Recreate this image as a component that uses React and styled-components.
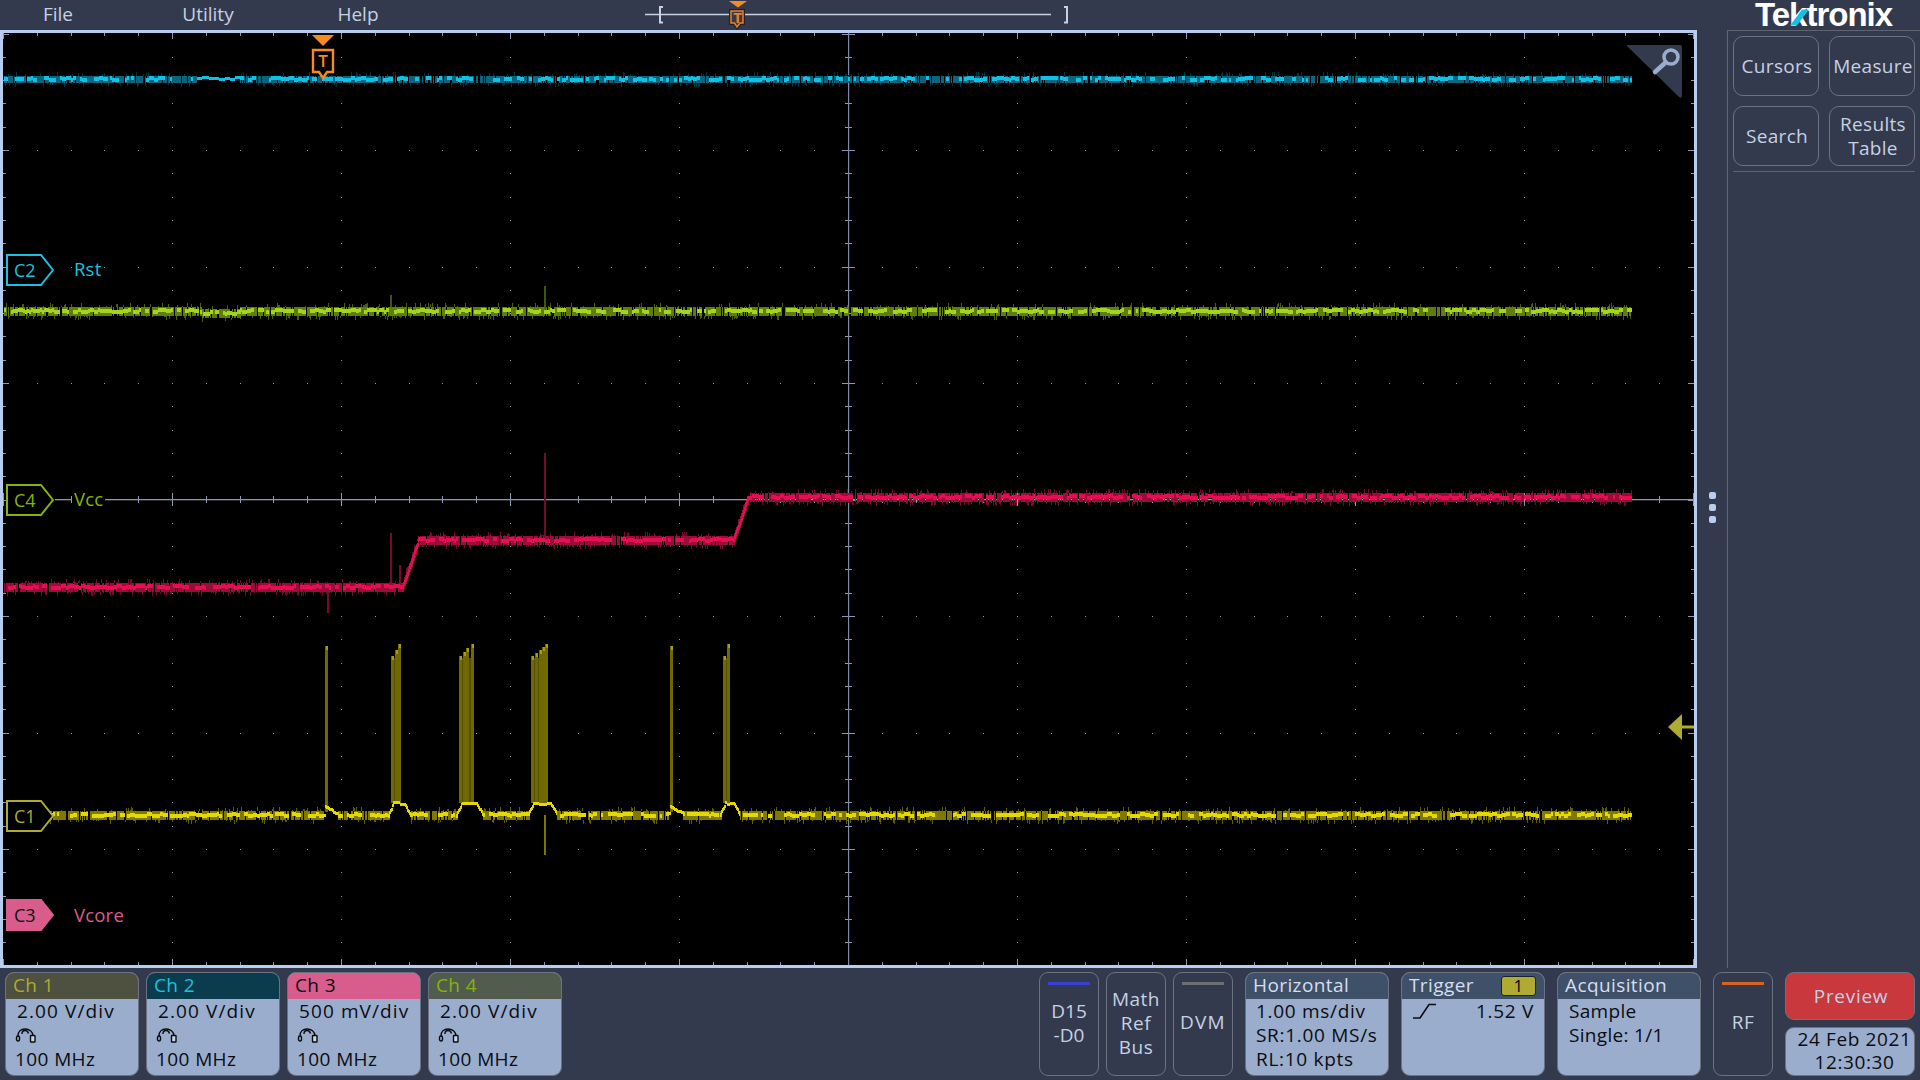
import React from "react";
import styled, { createGlobalStyle } from "styled-components";

const BG = "#333a4d";
const FRAME = "#b9cdef";
const BODY = "#9badcd";
const EDGE = "#6c7280";
const LIGHT = "#c5d1e4";

const Global = createGlobalStyle`
  html, body { margin: 0; padding: 0; background: ${BG}; }
  body { width: 1920px; height: 1080px; overflow: hidden; font-family: "Open Sans", "Noto Sans", sans-serif; }
`;

const Screen = styled.div`
  width: 1920px; height: 1080px; display: flex; flex-direction: column; background: ${BG};
`;
const Upper = styled.div`display: flex; height: 968px;`;
const MainColumn = styled.div`width: 1727px; display: flex; flex-direction: column;`;
const MenuBar = styled.div`height: 30px; display: flex; align-items: center; padding-left: 8px;`;
const MenuItem = styled.div`
  width: 100px; margin-right: 50px; text-align: center; font-size: 19px; line-height: 29px; color: ${LIGHT}; height: 30px;
`;
const Timeline = styled.div`position: relative; width: 430px; height: 30px; margin-left: 182px;`;
const TimelineArt = styled.svg`display: block;`;
const MiniT = styled.span`
  position: absolute; left: 89px; top: 8px; width: 17px; text-align: center; font-size: 15px; font-weight: 700; line-height: 18px; color: #f0801f;
`;

const PlotRow = styled.div`display: flex; flex: 1;`;
const Graticule = styled.div`
  position: relative; width: 1691px; height: 932px; border: 3px solid ${FRAME}; background: #000; overflow: hidden;
`;
const PlotArt = styled.svg`display: block;`;
const HandleStrip = styled.div`
  width: 30px; display: flex; flex-direction: column; align-items: center; justify-content: center; gap: 5px; padding-top: 16px; box-sizing: border-box;
`;
const HandleDot = styled.span`display: block; width: 7px; height: 7px; border-radius: 2px; background: ${FRAME};`;

const Tag = styled.div`
  position: absolute; left: 3px; top: ${(p) => p.$top}px; width: 48px; height: 32px; display: flex; align-items: center; padding-left: 8px; box-sizing: border-box;
  font-size: 18px; line-height: 32px; color: ${(p) => p.$fg};
`;
const TagShape = styled.svg`position: absolute; left: 0; top: 0;`;
const TagText = styled.span`position: relative;`;
const TraceName = styled.div`
  position: absolute; left: 69px; top: ${(p) => p.$top}px; padding: 0 2px; background: #000; font-size: 18.5px; line-height: 22px; color: ${(p) => p.$fg}; letter-spacing: 0.2px;
`;
const TriggerMark = styled.div`position: absolute; left: 308px; top: 2px; width: 24px; height: 48px;`;
const TriggerArt = styled.svg`position: absolute; left: 0; top: 0;`;
const TriggerLetter = styled.span`
  position: absolute; left: 0; top: 14px; width: 24px; text-align: center; font-size: 17px; font-weight: 600; line-height: 24px; color: #f68b1f;
`;

const SideColumn = styled.div`width: 193px; display: flex; flex-direction: column;`;
const LogoRow = styled.div`height: 30px; position: relative;`;
const Logo = styled.div`
  position: absolute; left: 28px; top: 0; font-family: "Liberation Sans", sans-serif; font-weight: 700; font-size: 33px; line-height: 30px; letter-spacing: -1px; color: #fff; white-space: nowrap;
`;
const LogoSlash = styled.svg`position: absolute; left: 0; top: 0;`;
const SidePanel = styled.div`flex: 1; border-left: 1px solid #5f6470; border-top: 1px solid #5f6470;`;
const ToolGrid = styled.div`
  display: grid; grid-template-columns: 86px 86px; grid-auto-rows: 60px; gap: 10px; margin: 5px 5px 0 5px; padding-bottom: 5px; border-bottom: 1px solid #5f6470;
`;
const ToolButton = styled.div`
  box-sizing: border-box; border: 1px solid ${EDGE}; border-radius: 10px; display: flex; align-items: center; justify-content: center; text-align: center; padding-left: 2px; font-size: 19px; line-height: 24px; color: ${LIGHT}; letter-spacing: 0.3px;
`;

const BottomBar = styled.div`
  height: 112px; box-sizing: border-box; display: flex; padding: 4px 5px 4px 5px; gap: 12px;
`;
const ChannelGroup = styled.div`display: flex; gap: 7px; margin-right: auto;`;
const SmallGroup = styled.div`display: flex; gap: 7px;`;
const Card = styled.div`
  width: ${(p) => p.$w}px; box-sizing: border-box; height: 104px; border: 1.5px solid ${EDGE}; border-radius: 9px; overflow: hidden; background: ${BODY}; display: flex; flex-direction: column;
`;
const CardHead = styled.div`
  height: 26px; box-sizing: border-box; flex: none; display: flex; align-items: center; justify-content: space-between; padding: 0 8px 2px 7px; font-size: 19px; letter-spacing: 0.4px; background: ${(p) => p.$bg}; color: ${(p) => p.$fg};
`;
const CardBody = styled.div`
  position: relative; flex: 1; padding: 0 0 0 ${(p) => p.$inset || 10}px; font-size: 19px; line-height: 24px; color: #0a0c10; letter-spacing: ${(p) => p.$ls || 0.7}px; white-space: nowrap;
`;
const ScaleLine = styled.div`margin-left: 1px; letter-spacing: 1.1px;`;
const BandLine = styled.div`margin-left: -1px; letter-spacing: 0.4px;`;
const ProbeRow = styled.div`height: 24px; display: flex; align-items: center; margin-left: -1px;`;
const TriggerBadge = styled.span`
  width: 35px; height: 20px; flex: none; margin-bottom: -2px; box-sizing: border-box; border: 1px solid #1d2026; border-radius: 3px; background: #aeaa32; color: #000; font-size: 16px; line-height: 18px; text-align: center;
`;
const TriggerLine = styled.div`display: flex; align-items: center; justify-content: space-between; padding-right: 10px; height: 24px;`;
const Outline = styled.div`
  width: 60px; box-sizing: border-box; height: 104px; border: 1.5px solid ${EDGE}; border-radius: 9px; display: flex; flex-direction: column; align-items: center; padding-top: ${(p) => p.$pad}px; font-size: 19px; line-height: 24px; color: ${LIGHT}; letter-spacing: ${(p) => p.$ls ?? 0.5}px;
`;
const ColorBar = styled.span`
  display: block; width: 42px; height: 3px; flex: none; background: ${(p) => p.$c}; margin-bottom: ${(p) => p.$gap}px;
`;
const StatusColumn = styled.div`width: 130px; display: flex; flex-direction: column; gap: 7px;`;
const PreviewButton = styled.div`
  height: 48px; box-sizing: border-box; border: 1.5px solid ${EDGE}; border-radius: 9px; padding-left: 2px; background: #c8383d; color: ${LIGHT}; font-size: 19px; letter-spacing: 0.7px; display: flex; align-items: center; justify-content: center;
`;
const DateBox = styled.div`
  height: 49px; box-sizing: border-box; border: 1.5px solid ${EDGE}; border-radius: 9px; padding-left: 9px; background: ${BODY}; color: #0a0c10; font-size: 19px; line-height: 23px; text-align: center; letter-spacing: 0.6px; white-space: nowrap;
`;

/* ---------- waveform data ---------- */
const rng = (seed) => () => {
  seed |= 0; seed = (seed + 0x6d2b79f5) | 0;
  let t = Math.imul(seed ^ (seed >>> 15), 1 | seed);
  t = (t + Math.imul(t ^ (t >>> 7), 61 | t)) ^ t;
  return ((t ^ (t >>> 14)) >>> 0) / 4294967296;
};

const bar = (x, y, w, h) => `M${x} ${y}h${w}v${h}h${-w}z`;

function makeTrace({ seed, from, to, level, quiet, holes = 0.14, tick = 0.28, band = 3 }) {
  const r = rng(seed);
  let core = "", mid = "", dim = "";
  let run = 0, off = 0, gap = false;
  for (let x = from; x < to; x++) {
    const y = level(x);
    const q = quiet ? quiet(x) : false;
    const steep = level(x + 1) !== y;
    if (run-- <= 0) {
      run = 1 + Math.floor(r() * 4);
      off = Math.round((r() - 0.5) * 2.6);
      gap = r() < holes;
    }
    if (!gap || q || steep) core += bar(x, y + off - 2, steep ? 2 : 1, q ? 3 : 4);
    if (!q && r() < 0.82) mid += bar(x, y - band, steep ? 2 : 1, band * 2 + 1);
    if (!q && r() < tick) {
      const up = r() < 0.45;
      const len = 1 + Math.floor(r() * 4);
      dim += bar(x, up ? y - band - len : y + band + 1, 1, len);
    }
  }
  return { core, mid, dim };
}

const lerp = (a, b, t) => a + (b - a) * t;
const redLevel = (x) => {
  if (x < 402) return 587;
  if (x < 418) return Math.round(lerp(587, 542, (x - 402) / 16));
  if (x < 733) return 540;
  if (x < 748) return Math.round(lerp(540, 497, (x - 733) / 15));
  return 497;
};

const PULSES = [
  { a: 325, b: 328, hump: false, cols: [325] },
  { a: 390, b: 401, hump: true, cols: [391, 395, 398] },
  { a: 458, b: 473, hump: true, cols: [459, 463, 466, 471] },
  { a: 530, b: 547, hump: true, cols: [531, 535, 539, 542, 545] },
  { a: 670, b: 673, hump: false, cols: [670] },
  { a: 722, b: 730, hump: true, cols: [723, 727] },
];
const yellowLevel = (x) => {
  for (const p of PULSES) {
    if (p.hump && x >= p.a - 1 && x < p.a + 3) return Math.round(lerp(812, 805, (x - p.a + 1) / 4));
    if (p.hump && x >= p.a && x <= p.b + 3) return 804;
    if (p.hump && x > p.b + 3 && x <= p.b + 9) return Math.round(lerp(804, 815, (x - p.b - 3) / 6));
    if (!p.hump && x >= p.a && x <= p.b + 10) return Math.round(lerp(806, 815, (x - p.a) / 13));
  }
  return 815;
};
const yellowQuiet = (x) => PULSES.some((p) => x >= p.a - 1 && x <= p.b + 9);

const TRACES = [
  { key: "c2", coreColor: "#08c2e6", midColor: "#07657d", dimColor: "#043542",
    paths: makeTrace({ seed: 11, from: 4, to: 1632, level: () => 79, quiet: (x) => x > 196 && x < 240, holes: 0.32 }) },
  { key: "c4", coreColor: "#a2d61c", midColor: "#5f7c10", dimColor: "#465f0c",
    paths: makeTrace({ seed: 23, from: 4, to: 1632, level: (x) => (x > 200 && x < 240 ? 313 : 311), holes: 0.2, band: 4 }) },
  { key: "c3", coreColor: "#e80e52", midColor: "#980b3a", dimColor: "#70092c",
    paths: makeTrace({ seed: 37, from: 4, to: 1632, level: redLevel, tick: 0.45, band: 4, holes: 0.18 }) },
  { key: "c1", coreColor: "#e6d900", midColor: "#807900", dimColor: "#625c00",
    paths: makeTrace({ seed: 41, from: 48, to: 1632, level: yellowLevel, quiet: yellowQuiet, band: 4, holes: 0.22 }) },
];

const pulseTop = (p, i) => (p.hump ? 656 - Math.round((i / Math.max(p.cols.length - 1, 1)) * 12) : 646);
const pulseShade = PULSES.filter((p) => p.hump)
  .map((p) => bar(p.a + 1, 658, p.b - p.a - 1, 144)).join("");
const pulseLines = PULSES.flatMap((p) => p.cols.map((x, i) => {
  const top = pulseTop(p, i);
  return bar(x, top, 3, (p.hump ? 803 : 812) - top);
})).join("");
const pulseTips = PULSES.flatMap((p) => p.cols.map((x, i) => bar(x + 1, pulseTop(p, i), 2, 4))).join("");

const SPIKES = [
  { x: 544, y: 453, h: 87, c: "#74082a" },
  { x: 390, y: 533, h: 50, c: "#74082a" },
  { x: 399, y: 565, h: 22, c: "#74082a" },
  { x: 327, y: 590, h: 23, c: "#74082a" },
  { x: 544, y: 286, h: 24, c: "#3f540c" },
  { x: 390, y: 295, h: 14, c: "#3f540c" },
  { x: 544, y: 815, h: 40, c: "#7c7400" },
];

function gridPath() {
  let d = "";
  const px = 169, py = 116.5, x0 = 3, y0 = 33.5;
  for (let i = 0; i <= 10; i++) {
    for (let j = 0; j <= 40; j++) {
      d += bar(Math.round(x0 + i * px), Math.round(y0 + (j * py) / 5), 1, 1);
    }
  }
  for (let j = 0; j <= 8; j++) {
    for (let i = 0; i <= 50; i++) {
      d += bar(Math.round(x0 + (i * px) / 5), Math.round(y0 + j * py), 1, 1);
    }
  }
  for (let i = 0; i <= 50; i++) {
    const x = Math.round(x0 + (i * px) / 5);
    const major = i % 5 === 0;
    const l = major ? 6 : 3;
    d += bar(x, 33, 1, l) + bar(x, 965 - l, 1, l);
    d += bar(x, major ? 493 : 496, 1, major ? 13 : 7);
  }
  for (let j = 0; j <= 40; j++) {
    const y = Math.round(y0 + (j * py) / 5);
    const major = j % 5 === 0;
    const l = major ? 6 : 3;
    d += bar(3, y, l, 1) + bar(1694 - l, y, l, 1);
    d += bar(major ? 842 : 845, y, major ? 13 : 7, 1);
  }
  return d;
}
const GRID = gridPath();

const ChannelTag = ({ top, label, color, filled }) => (
  <Tag $top={top} $fg={filled ? "#111" : color}>
    <TagShape width="48" height="32" viewBox="0 0 48 32">
      <path d="M1 1H35L47 16L35 31H1Z" fill={filled ? color : "#000"} stroke={color} strokeWidth="2" />
    </TagShape>
    <TagText>{label}</TagText>
  </Tag>
);

const ProbeIcon = () => (
  <svg width="22" height="15" viewBox="0 0 22 15" fill="none" stroke="#0a0c10" strokeWidth="1.4">
    <path d="M3 8C3 3.5 6 1 10 1s8 2.5 8 7" />
    <path d="M7 6c0-2.5 1.5-3.5 3-3.5s3 1 3.5 3" />
    <rect x="1.5" y="8" width="3" height="5" rx="1.5" />
    <rect x="15.5" y="7.5" width="4.5" height="6.5" rx="0.6" fill="#c8d4e8" />
  </svg>
);

const Channel = ({ name, scale, bg, fg }) => (
  <Card $w={134}>
    <CardHead $bg={bg} $fg={fg}>{name}</CardHead>
    <CardBody>
      <ScaleLine>{scale}</ScaleLine>
      <ProbeRow><ProbeIcon /></ProbeRow>
      <BandLine>100 MHz</BandLine>
    </CardBody>
  </Card>
);

export default function App() {
  return (
    <Screen>
      <Global />
      <Upper>
        <MainColumn>
          <MenuBar>
            <MenuItem>File</MenuItem>
            <MenuItem>Utility</MenuItem>
            <MenuItem>Help</MenuItem>
            <Timeline>
              <TimelineArt width="430" height="30" viewBox="640 0 430 30">
                <path d="M645 14.5H1051" stroke="#c5d1e4" strokeWidth="1.3" />
                <path d="M663 7H660V22.5H663M1064 7H1067V22.5H1064" fill="none" stroke="#c5d1e4" strokeWidth="2" />
                <path d="M729 1H747L738 7.5Z" fill="#f68b1f" />
                <path d="M729 9H745V25H741.5L737 30L733 25H729Z" fill="#1d2230" />
                <path d="M731 11H743V23H740L737 27L734.5 23H731Z" fill="#333a4d" stroke="#f0801f" strokeWidth="1.5" />
              </TimelineArt>
              <MiniT>T</MiniT>
            </Timeline>
          </MenuBar>
          <PlotRow>
            <Graticule>
              <PlotArt width="1691" height="932" viewBox="3 33 1691 932">
                <defs>
                  <filter id="soft" x="0" y="0" width="1" height="1">
                    <feGaussianBlur stdDeviation="0.6" />
                  </filter>
                </defs>
                <path d={GRID} fill="#8f99b3" shapeRendering="crispEdges" />
                <rect x="848" y="33" width="1.2" height="932" fill="#7f89a6" />
                <rect x="55" y="499" width="1639" height="1.3" fill="#8b94b0" />
                <g filter="url(#soft)">
                  <rect x="3" y="33" width="1691" height="932" fill="#000" fillOpacity="0" />
                  <path d={pulseShade} fill="#575100" />
                  <path d={pulseLines} fill="#6f6800" />
                  <path d={pulseTips} fill="#a89e00" />
                  {SPIKES.map((s) => (
                    <rect key={`${s.x}-${s.y}`} x={s.x} y={s.y} width="2" height={s.h} fill={s.c} />
                  ))}
                  {TRACES.map((t) => (
                    <g key={t.key}>
                      <path d={t.paths.dim} fill={t.dimColor} />
                      <path d={t.paths.mid} fill={t.midColor} />
                      <path d={t.paths.core} fill={t.coreColor} />
                    </g>
                  ))}
                </g>
                <path d="M1627 45H1680Q1682 45 1682 47V96Q1682 99 1679 97L1628 47Q1626 45 1627 45Z" fill="#333a4d" />
                <circle cx="1671" cy="57" r="7" fill="none" stroke="#9badcd" strokeWidth="3.5" />
                <path d="M1665 63L1655 72" stroke="#9badcd" strokeWidth="4.5" strokeLinecap="round" />
                <path d="M1668 727L1682 714V740Z" fill="#aeaa32" />
                <rect x="1680" y="725.5" width="14" height="3" fill="#aeaa32" />
              </PlotArt>
              <ChannelTag top={221} label="C2" color="#19c3df" />
              <TraceName $top={225} $fg="#19c3df">Rst</TraceName>
              <ChannelTag top={451} label="C4" color="#85b40a" />
              <TraceName $top={455} $fg="#85b40a">Vcc</TraceName>
              <ChannelTag top={767} label="C1" color="#aeaa32" />
              <ChannelTag top={866} label="C3" color="#d95d8c" filled />
              <TraceName $top={871} $fg="#d95d8c">Vcore</TraceName>
              <TriggerMark>
                <TriggerArt width="24" height="48" viewBox="0 0 24 48">
                  <path d="M1 0H23L12 11Z" fill="#f68b1f" />
                  <path d="M2 15H22V37H16L12 43L8 37H2Z" fill="#000" stroke="#f68b1f" strokeWidth="2.4" />
                </TriggerArt>
                <TriggerLetter>T</TriggerLetter>
              </TriggerMark>
            </Graticule>
            <HandleStrip>
              <HandleDot />
              <HandleDot />
              <HandleDot />
            </HandleStrip>
          </PlotRow>
        </MainColumn>
        <SideColumn>
          <LogoRow>
            <Logo>Tektronix</Logo>
            <LogoSlash width="193" height="30" viewBox="1727 0 193 30">
              <path d="M1790 25.5H1797L1809 9.5H1802Z" fill="#19bfe0" />
            </LogoSlash>
          </LogoRow>
          <SidePanel>
            <ToolGrid>
              <ToolButton>Cursors</ToolButton>
              <ToolButton>Measure</ToolButton>
              <ToolButton>Search</ToolButton>
              <ToolButton>Results<br />Table</ToolButton>
            </ToolGrid>
          </SidePanel>
        </SideColumn>
      </Upper>
      <BottomBar>
        <ChannelGroup>
          <Channel name="Ch 1" scale="2.00 V/div" bg="#4e5140" fg="#aeaa32" />
          <Channel name="Ch 2" scale="2.00 V/div" bg="#0b3c4e" fg="#19c3df" />
          <Channel name="Ch 3" scale="500 mV/div" bg="#d95d8c" fg="#0a0c10" />
          <Channel name="Ch 4" scale="2.00 V/div" bg="#525c4e" fg="#85b40a" />
        </ChannelGroup>
        <SmallGroup>
          <Outline $pad={9} $ls={0}>
            <ColorBar $c="#3a3fd8" $gap={14} />
            <div>D15</div>
            <div>-D0</div>
          </Outline>
          <Outline $pad={14}>
            <div>Math</div>
            <div>Ref</div>
            <div>Bus</div>
          </Outline>
          <Outline $pad={9} $ls={1.2}>
            <ColorBar $c="#6d7070" $gap={25} />
            <div>DVM</div>
          </Outline>
        </SmallGroup>
        <Card $w={144}>
          <CardHead $bg="#3f5069" $fg="#d5dfee">Horizontal</CardHead>
          <CardBody>
            <div>1.00 ms/div</div>
            <div>SR:1.00 MS/s</div>
            <div>RL:10 kpts</div>
          </CardBody>
        </Card>
        <Card $w={144}>
          <CardHead $bg="#3f5069" $fg="#d5dfee">
            Trigger
            <TriggerBadge>1</TriggerBadge>
          </CardHead>
          <CardBody>
            <TriggerLine>
              <svg width="24" height="16" viewBox="0 0 24 16" fill="none" stroke="#0a0c10" strokeWidth="1.6">
                <path d="M1 15H8L17 1.5H24" />
              </svg>
              <span>1.52 V</span>
            </TriggerLine>
          </CardBody>
        </Card>
        <Card $w={144}>
          <CardHead $bg="#3f5069" $fg="#d5dfee">Acquisition</CardHead>
          <CardBody $inset={11} $ls={0.3}>
            <div>Sample</div>
            <div>Single: 1/1</div>
          </CardBody>
        </Card>
        <Outline $pad={9}>
          <ColorBar $c="#d9621e" $gap={25} />
          <div>RF</div>
        </Outline>
        <StatusColumn>
          <PreviewButton>Preview</PreviewButton>
          <DateBox>
            <div>24 Feb 2021</div>
            <div>12:30:30</div>
          </DateBox>
        </StatusColumn>
      </BottomBar>
    </Screen>
  );
}
